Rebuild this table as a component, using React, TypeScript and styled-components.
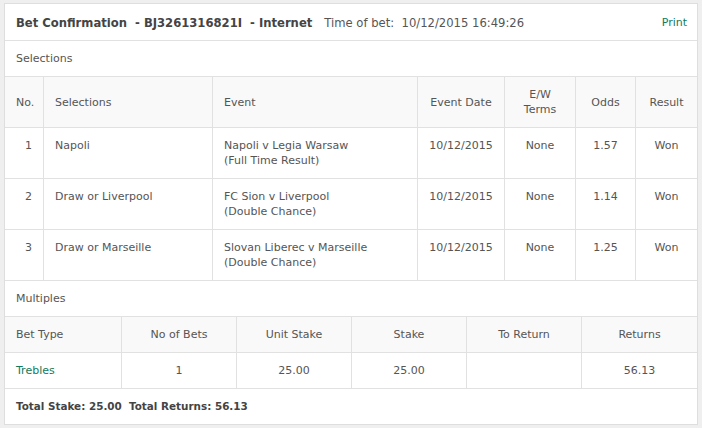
import React from "react";
import styled, { createGlobalStyle } from "styled-components";

const GlobalStyle = createGlobalStyle`
  html, body {
    margin: 0;
    padding: 0;
    background: #efefef;
  }
  body {
    font-family: "DejaVu Sans", Verdana, sans-serif;
    font-size: 11px;
    color: #555;
  }
`;

type Selection = {
  no: number;
  selection: string;
  event: string;
  market: string;
  date: string;
  ew: string;
  odds: string;
  result: string;
};

const selections: Selection[] = [
  {
    no: 1,
    selection: "Napoli",
    event: "Napoli v Legia Warsaw",
    market: "(Full Time Result)",
    date: "10/12/2015",
    ew: "None",
    odds: "1.57",
    result: "Won",
  },
  {
    no: 2,
    selection: "Draw or Liverpool",
    event: "FC Sion v Liverpool",
    market: "(Double Chance)",
    date: "10/12/2015",
    ew: "None",
    odds: "1.14",
    result: "Won",
  },
  {
    no: 3,
    selection: "Draw or Marseille",
    event: "Slovan Liberec v Marseille",
    market: "(Double Chance)",
    date: "10/12/2015",
    ew: "None",
    odds: "1.25",
    result: "Won",
  },
];

const SEL_COLS = "38px 169px 205px 87px 71px 60px 62px";
const MULT_COLS = "116px 115px 115px 115px 115px 116px";

const App = () => {
  return (
    <Page>
      <GlobalStyle />
      <Panel>
        <TopBar>
          <Title>
            Bet Confirmation&nbsp; - BJ3261316821I&nbsp; - Internet
          </Title>
          <TimeOfBet>Time of bet:&nbsp; 10/12/2015 16:49:26</TimeOfBet>
          <PrintLink href="#">Print</PrintLink>
        </TopBar>

        <SectionLabel>Selections</SectionLabel>

        <Row $cols={SEL_COLS} $height={51} $head>
          <Cell $align="right">No.</Cell>
          <Cell>Selections</Cell>
          <Cell>Event</Cell>
          <Cell $align="center">Event Date</Cell>
          <Cell $align="center">
            E/W
            <br />
            Terms
          </Cell>
          <Cell $align="center">Odds</Cell>
          <Cell $align="center">Result</Cell>
        </Row>
        {selections.map((s) => (
          <Row key={s.no} $cols={SEL_COLS} $height={51} $top>
            <Cell $align="right">{s.no}</Cell>
            <Cell>{s.selection}</Cell>
            <Cell>
              {s.event}
              <br />
              {s.market}
            </Cell>
            <Cell $align="center">{s.date}</Cell>
            <Cell $align="center">{s.ew}</Cell>
            <Cell $align="center">{s.odds}</Cell>
            <Cell $align="center">{s.result}</Cell>
          </Row>
        ))}

        <SectionLabel>Multiples</SectionLabel>

        <Row $cols={MULT_COLS} $height={36} $head>
          <Cell>Bet Type</Cell>
          <Cell $align="center">No of Bets</Cell>
          <Cell $align="center">Unit Stake</Cell>
          <Cell $align="center">Stake</Cell>
          <Cell $align="center">To Return</Cell>
          <Cell $align="center">Returns</Cell>
        </Row>
        <Row $cols={MULT_COLS} $height={36}>
          <Cell>
            <GreenText>Trebles</GreenText>
          </Cell>
          <Cell $align="center">1</Cell>
          <Cell $align="center">25.00</Cell>
          <Cell $align="center">25.00</Cell>
          <Cell $align="center"></Cell>
          <Cell $align="center">56.13</Cell>
        </Row>

        <Totals>
          Total Stake: 25.00&nbsp; Total Returns: 56.13
        </Totals>
      </Panel>
    </Page>
  );
};

export default App;

// layout

const Page = styled.div`
  padding: 3px 4px 4px 4px;
`;

const Panel = styled.div`
  width: 694px;
  box-sizing: border-box;
  background: #fff;
  border: 1px solid #dedede;
`;

const TopBar = styled.div`
  display: flex;
  align-items: center;
  height: 37px;
  box-sizing: border-box;
  padding: 1px 10px 0 11px;
  border-bottom: 1px solid #e1e1e1;
  font-size: 11.6px;
`;

const Title = styled.span`
  font-weight: 700;
  color: #444;
`;

const TimeOfBet = styled.span`
  margin-left: 12px;
  color: #555;
`;

const PrintLink = styled.a`
  margin-left: auto;
  font-size: 11px;
  color: #127a5c;
  text-decoration: none;
`;

const SectionLabel = styled.div`
  height: 36px;
  box-sizing: border-box;
  padding: 10px 11px;
  line-height: 15px;
  border-bottom: 1px solid #e1e1e1;
`;

const Row = styled.div<{
  $cols: string;
  $height: number;
  $head?: boolean;
  $top?: boolean;
}>`
  --valign: ${(p) => (p.$top ? "flex-start" : "center")};
  display: grid;
  grid-template-columns: ${(p) => p.$cols};
  height: ${(p) => p.$height}px;
  box-sizing: border-box;
  border-bottom: 1px solid #e1e1e1;
  background: ${(p) => (p.$head ? "#f9f9f9" : "#fff")};
`;

const Cell = styled.div<{ $align?: "left" | "center" | "right" }>`
  box-sizing: border-box;
  display: flex;
  flex-direction: column;
  justify-content: var(--valign);
  padding: 10px 11px;
  line-height: 15px;
  text-align: ${(p) => p.$align || "left"};
  border-left: 1px solid #e1e1e1;
  &:first-child {
    border-left: none;
  }
`;

const GreenText = styled.span`
  color: #127a5c;
`;

const Totals = styled.div`
  height: 35px;
  box-sizing: border-box;
  padding: 10px 11px;
  line-height: 15px;
  font-size: 10.4px;
  font-weight: 700;
  color: #444;
`;
